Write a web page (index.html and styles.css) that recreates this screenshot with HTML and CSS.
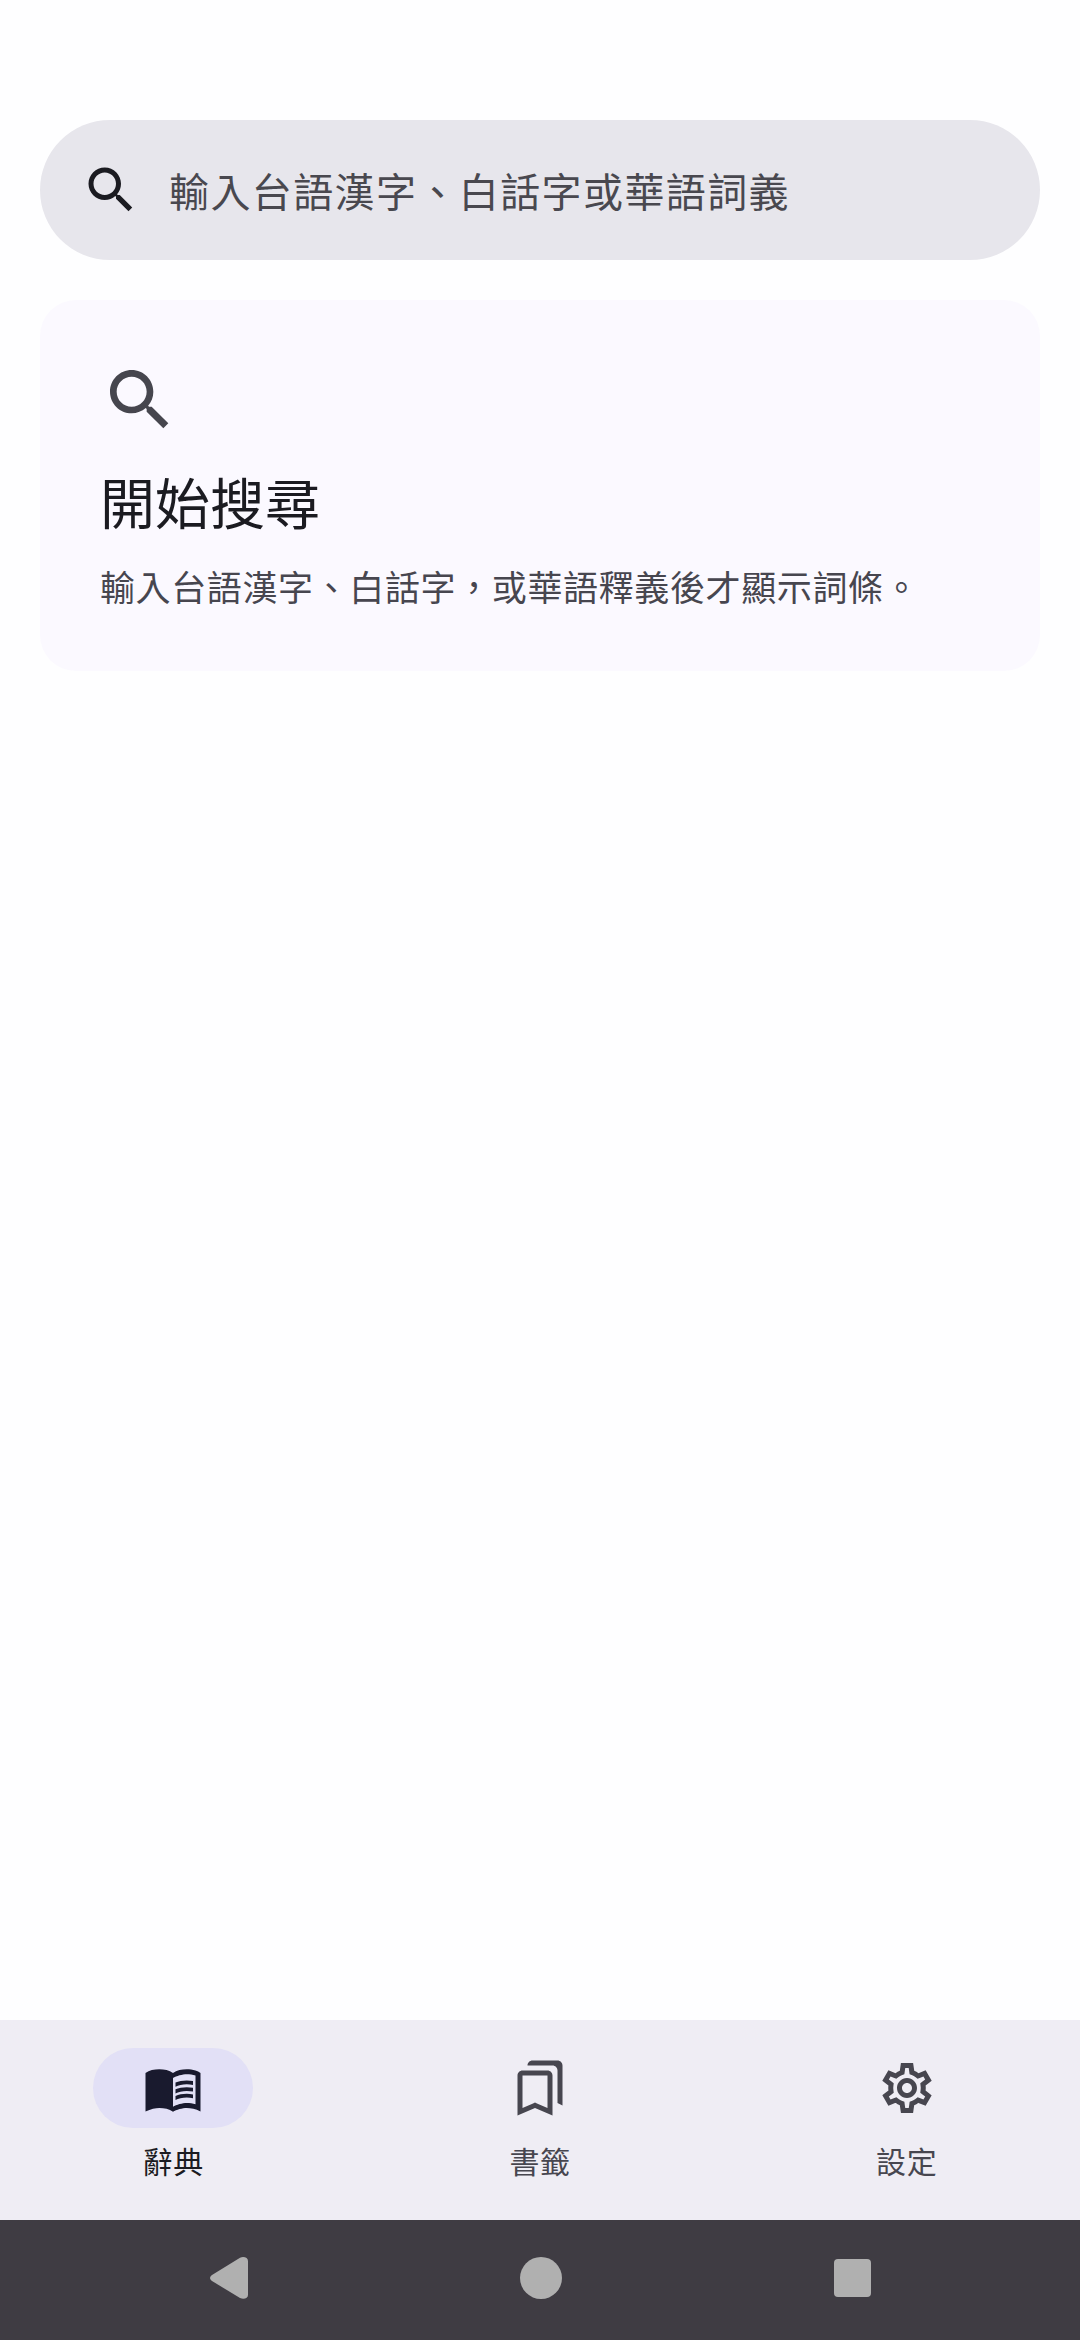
FILE: index.html
```html
<!DOCTYPE html>
<html lang="zh-Hant">
<head>
<meta charset="utf-8">
<title>辭典</title>
<link rel="stylesheet" href="styles.css">
</head>
<body>
<div class="screen">
  <main class="content">
    <div class="search">
      <svg class="search-icon" viewBox="0 0 24 24"><path d="M15.5 14h-.79l-.28-.27C15.41 12.59 16 11.11 16 9.5 16 5.91 13.09 3 9.5 3S3 5.91 3 9.5 5.91 16 9.5 16c1.61 0 3.09-.59 4.23-1.57l.27.28v.79l5 4.99L20.49 19l-4.99-5zm-6 0C7.01 14 5 11.99 5 9.5S7.01 5 9.5 5 14 7.01 14 9.5 11.99 14 9.5 14z"/></svg>
      <span class="placeholder">輸入台語漢字、白話字或華語詞義</span>
    </div>
    <section class="card">
      <svg class="card-icon" viewBox="0 0 24 24"><path d="M15.5 14h-.79l-.28-.27C15.41 12.59 16 11.11 16 9.5 16 5.91 13.09 3 9.5 3S3 5.91 3 9.5 5.91 16 9.5 16c1.61 0 3.09-.59 4.23-1.57l.27.28v.79l5 4.99L20.49 19l-4.99-5zm-6 0C7.01 14 5 11.99 5 9.5S7.01 5 9.5 5 14 7.01 14 9.5 11.99 14 9.5 14z"/></svg>
      <h1 class="card-title">開始搜尋</h1>
      <p class="card-text">輸入台語漢字、白話字，或華語釋義後才顯示詞條。</p>
    </section>
  </main>
  <nav class="nav">
    <div class="tab tab-active">
      <div class="pill">
        <svg class="nav-icon" viewBox="0 0 24 24"><path d="M21 5c-1.11-.35-2.33-.5-3.5-.5-1.95 0-4.05.4-5.5 1.5-1.45-1.1-3.55-1.5-5.5-1.5S2.45 4.9 1 6v15.4C3.1 20.45 5.05 20 6.5 20c1.95 0 4.05.4 5.5 1.5 1.35-.85 3.8-1.5 5.5-1.5 1.65 0 3.55.3 5.5 1.4V6c-.6-.45-1.25-.75-2-1zm0 13.5c-1.1-.35-2.3-.5-3.5-.5-1.7 0-4.15.65-5.5 1.5V8c1.35-.85 3.8-1.5 5.5-1.5 1.2 0 2.4.15 3.5.5v11.5z"/><path d="M17.5 10.5c.88 0 1.73.09 2.5.26V9.24c-.79-.15-1.64-.24-2.5-.24-1.7 0-3.24.29-4.5.83v1.66c1.13-.64 2.7-.99 4.5-.99zM13 12.49v1.66c1.13-.64 2.7-.99 4.5-.99.88 0 1.73.09 2.5.26V11.9c-.79-.15-1.64-.24-2.5-.24-1.7 0-3.24.3-4.5.83zM17.5 14.33c-1.7 0-3.24.29-4.5.83v1.66c1.13-.64 2.7-.99 4.5-.99.88 0 1.73.09 2.5.26v-1.52c-.79-.16-1.64-.24-2.5-.24z"/></svg>
      </div>
      <span class="tab-label">辭典</span>
    </div>
    <div class="tab">
      <div class="pill pill-plain">
        <svg class="nav-icon" viewBox="0 0 24 24"><path d="M15 7v12.97l-4.21-1.81-.79-.34-.79.34L5 19.97V7h10m4-6H8.99C7.89 1 7 1.9 7 3h10c1.1 0 2 .9 2 2v13l2 1V3c0-1.1-.9-2-2-2zm-4 4H5c-1.1 0-2 .9-2 2v16l7-3 7 3V7c0-1.1-.9-2-2-2z"/></svg>
      </div>
      <span class="tab-label">書籤</span>
    </div>
    <div class="tab">
      <div class="pill pill-plain">
        <svg class="nav-icon" viewBox="0 0 24 24"><path d="M19.44 12.99l-.01.02c.04-.33.08-.67.08-1.01 0-.34-.03-.66-.07-.99l.01.02 2.44-1.92-2.43-4.22-2.87 1.16.01.01c-.52-.4-1.09-.74-1.71-.99h.01L14.44 2H9.57l-.44 3.07h.01c-.62.25-1.19.59-1.71.99l.01-.01-2.88-1.17-2.44 4.22 2.44 1.92.01-.02c-.04.33-.07.65-.07.99 0 .34.03.68.08 1.01l-.01-.02-2.1 1.65-.33.26 2.43 4.2 2.88-1.15-.02-.04c.53.41 1.1.75 1.73 1.01h-.03L9.58 22h4.85s.03-.18.06-.42l.38-2.65h-.01c.62-.25 1.2-.59 1.73-1.01l-.02.04 2.88 1.15 2.43-4.2s-.14-.12-.33-.26l-2.11-1.66zM17.45 11.27c.04.31.05.52.05.73 0 .21-.02.43-.05.73l-.14 1.13.89.7 1.08.84-.7 1.21-1.27-.51-1.04-.42-.9.68c-.43.32-.84.56-1.25.73l-1.06.43-.16 1.13-.2 1.35h-1.4l-.19-1.35-.16-1.13-1.06-.43c-.43-.18-.83-.41-1.23-.71l-.91-.7-1.06.43-1.27.51-.7-1.21 1.08-.84.89-.7-.14-1.13c-.03-.31-.05-.54-.05-.74s.02-.43.05-.73l.14-1.13-.89-.7-1.08-.84.7-1.21 1.27.51 1.04.42.9-.68c.43-.32.84-.56 1.25-.73l1.06-.43.16-1.13.2-1.35h1.39l.19 1.35.16 1.13 1.06.43c.43.18.83.41 1.23.71l.91.7 1.06-.43 1.27-.51.7 1.21-1.07.85-.89.7.14 1.13zM12 8c-2.21 0-4 1.79-4 4s1.79 4 4 4 4-1.79 4-4-1.79-4-4-4zm0 6c-1.1 0-2-.9-2-2s.9-2 2-2 2 .9 2 2-.9 2-2 2z"/></svg>
      </div>
      <span class="tab-label">設定</span>
    </div>
  </nav>
  <div class="sysbar">
    <svg class="sys-back" viewBox="0 0 38 42"><path d="M2 18 L30 .8 C34 -1 38 1 38 4 V38 C38 41 34 43 30 41 L2 24 C-.6 22.4 -.6 19.6 2 18Z"/></svg>
    <div class="sys-home"></div>
    <div class="sys-recent"></div>
  </div>
</div>
</body>
</html>
```
FILE: styles.css
```css
* { box-sizing: border-box; }
html, body { margin: 0; padding: 0; }
body {
  font-family: "Noto Sans CJK TC", "Noto Sans", sans-serif;
  background: #fefeff;
  color: #1b1b21;
}
.screen {
  width: 1080px;
  height: 2340px;
  display: flex;
  flex-direction: column;
  overflow: hidden;
}
.content {
  flex: 1;
  padding: 120px 40px 0 40px;
  display: flex;
  flex-direction: column;
  gap: 40px;
}
.search {
  height: 140px;
  border-radius: 70px;
  background: #e7e6ec;
  display: flex;
  align-items: center;
  padding-left: 41px;
  gap: 28px;
}
.search-icon { width: 60px; height: 60px; fill: #1b1b21; flex: none; margin-top: -1px; }
.placeholder { font-size: 40px; letter-spacing: 1.4px; line-height: 60px; color: #49484f; white-space: nowrap; }
.card {
  height: 371px;
  border-radius: 36px;
  background: #fbf9ff;
  padding: 60px 60px 0 60px;
  display: flex;
  flex-direction: column;
  align-items: flex-start;
}
.card-icon { width: 80px; height: 80px; fill: #46464e; flex: none; }
.card-title { margin: 20px 0 0 0; font-size: 55px; font-weight: 400; line-height: 80px; color: #1b1b21; }
.card-text { margin: 21px 0 0 0; font-size: 35px; letter-spacing: .62px; line-height: 50px; color: #47464f; white-space: nowrap; }
.nav {
  height: 200px;
  flex: none;
  background: #efedf4;
  display: grid;
  grid-template-columns: repeat(3, 1fr);
  gap: 20px;
}
.tab {
  display: flex;
  flex-direction: column;
  align-items: center;
  padding-top: 28px;
  color: #47464f;
}
.tab-active { color: #1b1b21; }
.pill {
  width: 160px;
  height: 80px;
  border-radius: 40px;
  background: #e2e0f6;
  display: flex;
  align-items: center;
  justify-content: center;
}
.pill-plain { background: transparent; }
.nav-icon { width: 60px; height: 60px; fill: #47464f; }
.tab-active .nav-icon { fill: #191a2e; }
.tab-label { margin-top: 10px; font-size: 30px; line-height: 44px; letter-spacing: .6px; font-weight: 400; }
.sysbar {
  height: 120px;
  flex: none;
  background: #3f3c43;
  display: flex;
  align-items: center;
  padding-left: 210px;
  padding-bottom: 4px;
}
.sys-back { width: 38px; height: 42px; fill: #b0b0b0; }
.sys-home { width: 42px; height: 42px; border-radius: 50%; background: #b0b0b0; margin-left: 272px; }
.sys-recent { width: 37px; height: 38px; border-radius: 4px; background: #b0b0b0; margin-left: 272px; }
```
